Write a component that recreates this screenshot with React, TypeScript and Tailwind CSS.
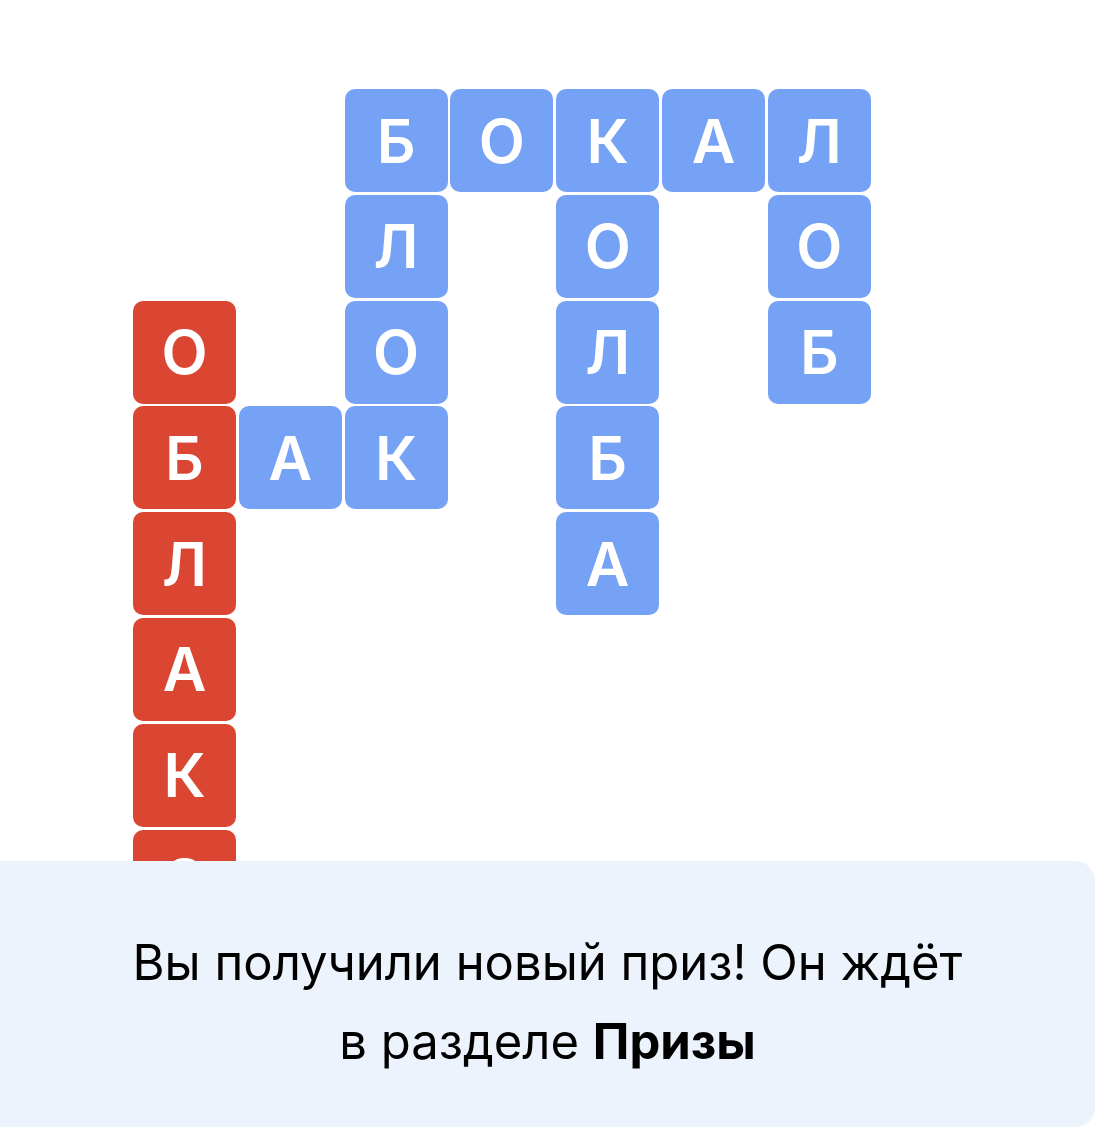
const blue = 'bg-[#76a2f5]';
const red = 'bg-[#db4633]';

type Tile = { r: number; c: number; ch: string; red?: boolean };

// позиции плиток кроссворда (строка, колонка)
const tiles: Tile[] = [
  { r: 1, c: 3, ch: 'Б' },
  { r: 1, c: 4, ch: 'О' },
  { r: 1, c: 5, ch: 'К' },
  { r: 1, c: 6, ch: 'А' },
  { r: 1, c: 7, ch: 'Л' },
  { r: 2, c: 3, ch: 'Л' },
  { r: 2, c: 5, ch: 'О' },
  { r: 2, c: 7, ch: 'О' },
  { r: 3, c: 1, ch: 'О', red: true },
  { r: 3, c: 3, ch: 'О' },
  { r: 3, c: 5, ch: 'Л' },
  { r: 3, c: 7, ch: 'Б' },
  { r: 4, c: 1, ch: 'Б', red: true },
  { r: 4, c: 2, ch: 'А' },
  { r: 4, c: 3, ch: 'К' },
  { r: 4, c: 5, ch: 'Б' },
  { r: 5, c: 1, ch: 'Л', red: true },
  { r: 5, c: 5, ch: 'А' },
  { r: 6, c: 1, ch: 'А', red: true },
  { r: 7, c: 1, ch: 'К', red: true },
  { r: 8, c: 1, ch: 'О', red: true },
];

const rowClass: Record<number, string> = {
  1: 'row-start-1', 2: 'row-start-2', 3: 'row-start-3', 4: 'row-start-4',
  5: 'row-start-5', 6: 'row-start-6', 7: 'row-start-7', 8: 'row-start-8',
};
const colClass: Record<number, string> = {
  1: 'col-start-1', 2: 'col-start-2', 3: 'col-start-3', 4: 'col-start-4',
  5: 'col-start-5', 6: 'col-start-6', 7: 'col-start-7',
};

export default function App() {
  return (
    <div className="w-[1095px] h-[1134px] bg-white flex flex-col overflow-hidden" style={{ fontFamily: 'Inter, "Noto Sans", sans-serif' }}>
      <div className="h-[861px] overflow-hidden pt-[89px] pl-[133px]">
        <div className="grid grid-cols-[repeat(7,103px)] grid-rows-[repeat(8,103px)] gap-[2.8px]">
          {tiles.map((t, i) => (
            <div
              key={i}
              className={`${rowClass[t.r]} ${colClass[t.c]} ${t.red ? red : blue} rounded-[10px] flex items-center justify-center text-white text-[60px] font-semibold leading-none`}
            >
              {t.ch}
            </div>
          ))}
        </div>
      </div>
      <div className="h-[266px] bg-[#edf3fd] rounded-r-[20px] pt-[62px] text-center text-black text-[49px] leading-[79px]">
        <p>Вы получили новый приз! Он ждёт</p>
        <p>
          в разделе <span className="font-bold">Призы</span>
        </p>
      </div>
    </div>
  );
}
